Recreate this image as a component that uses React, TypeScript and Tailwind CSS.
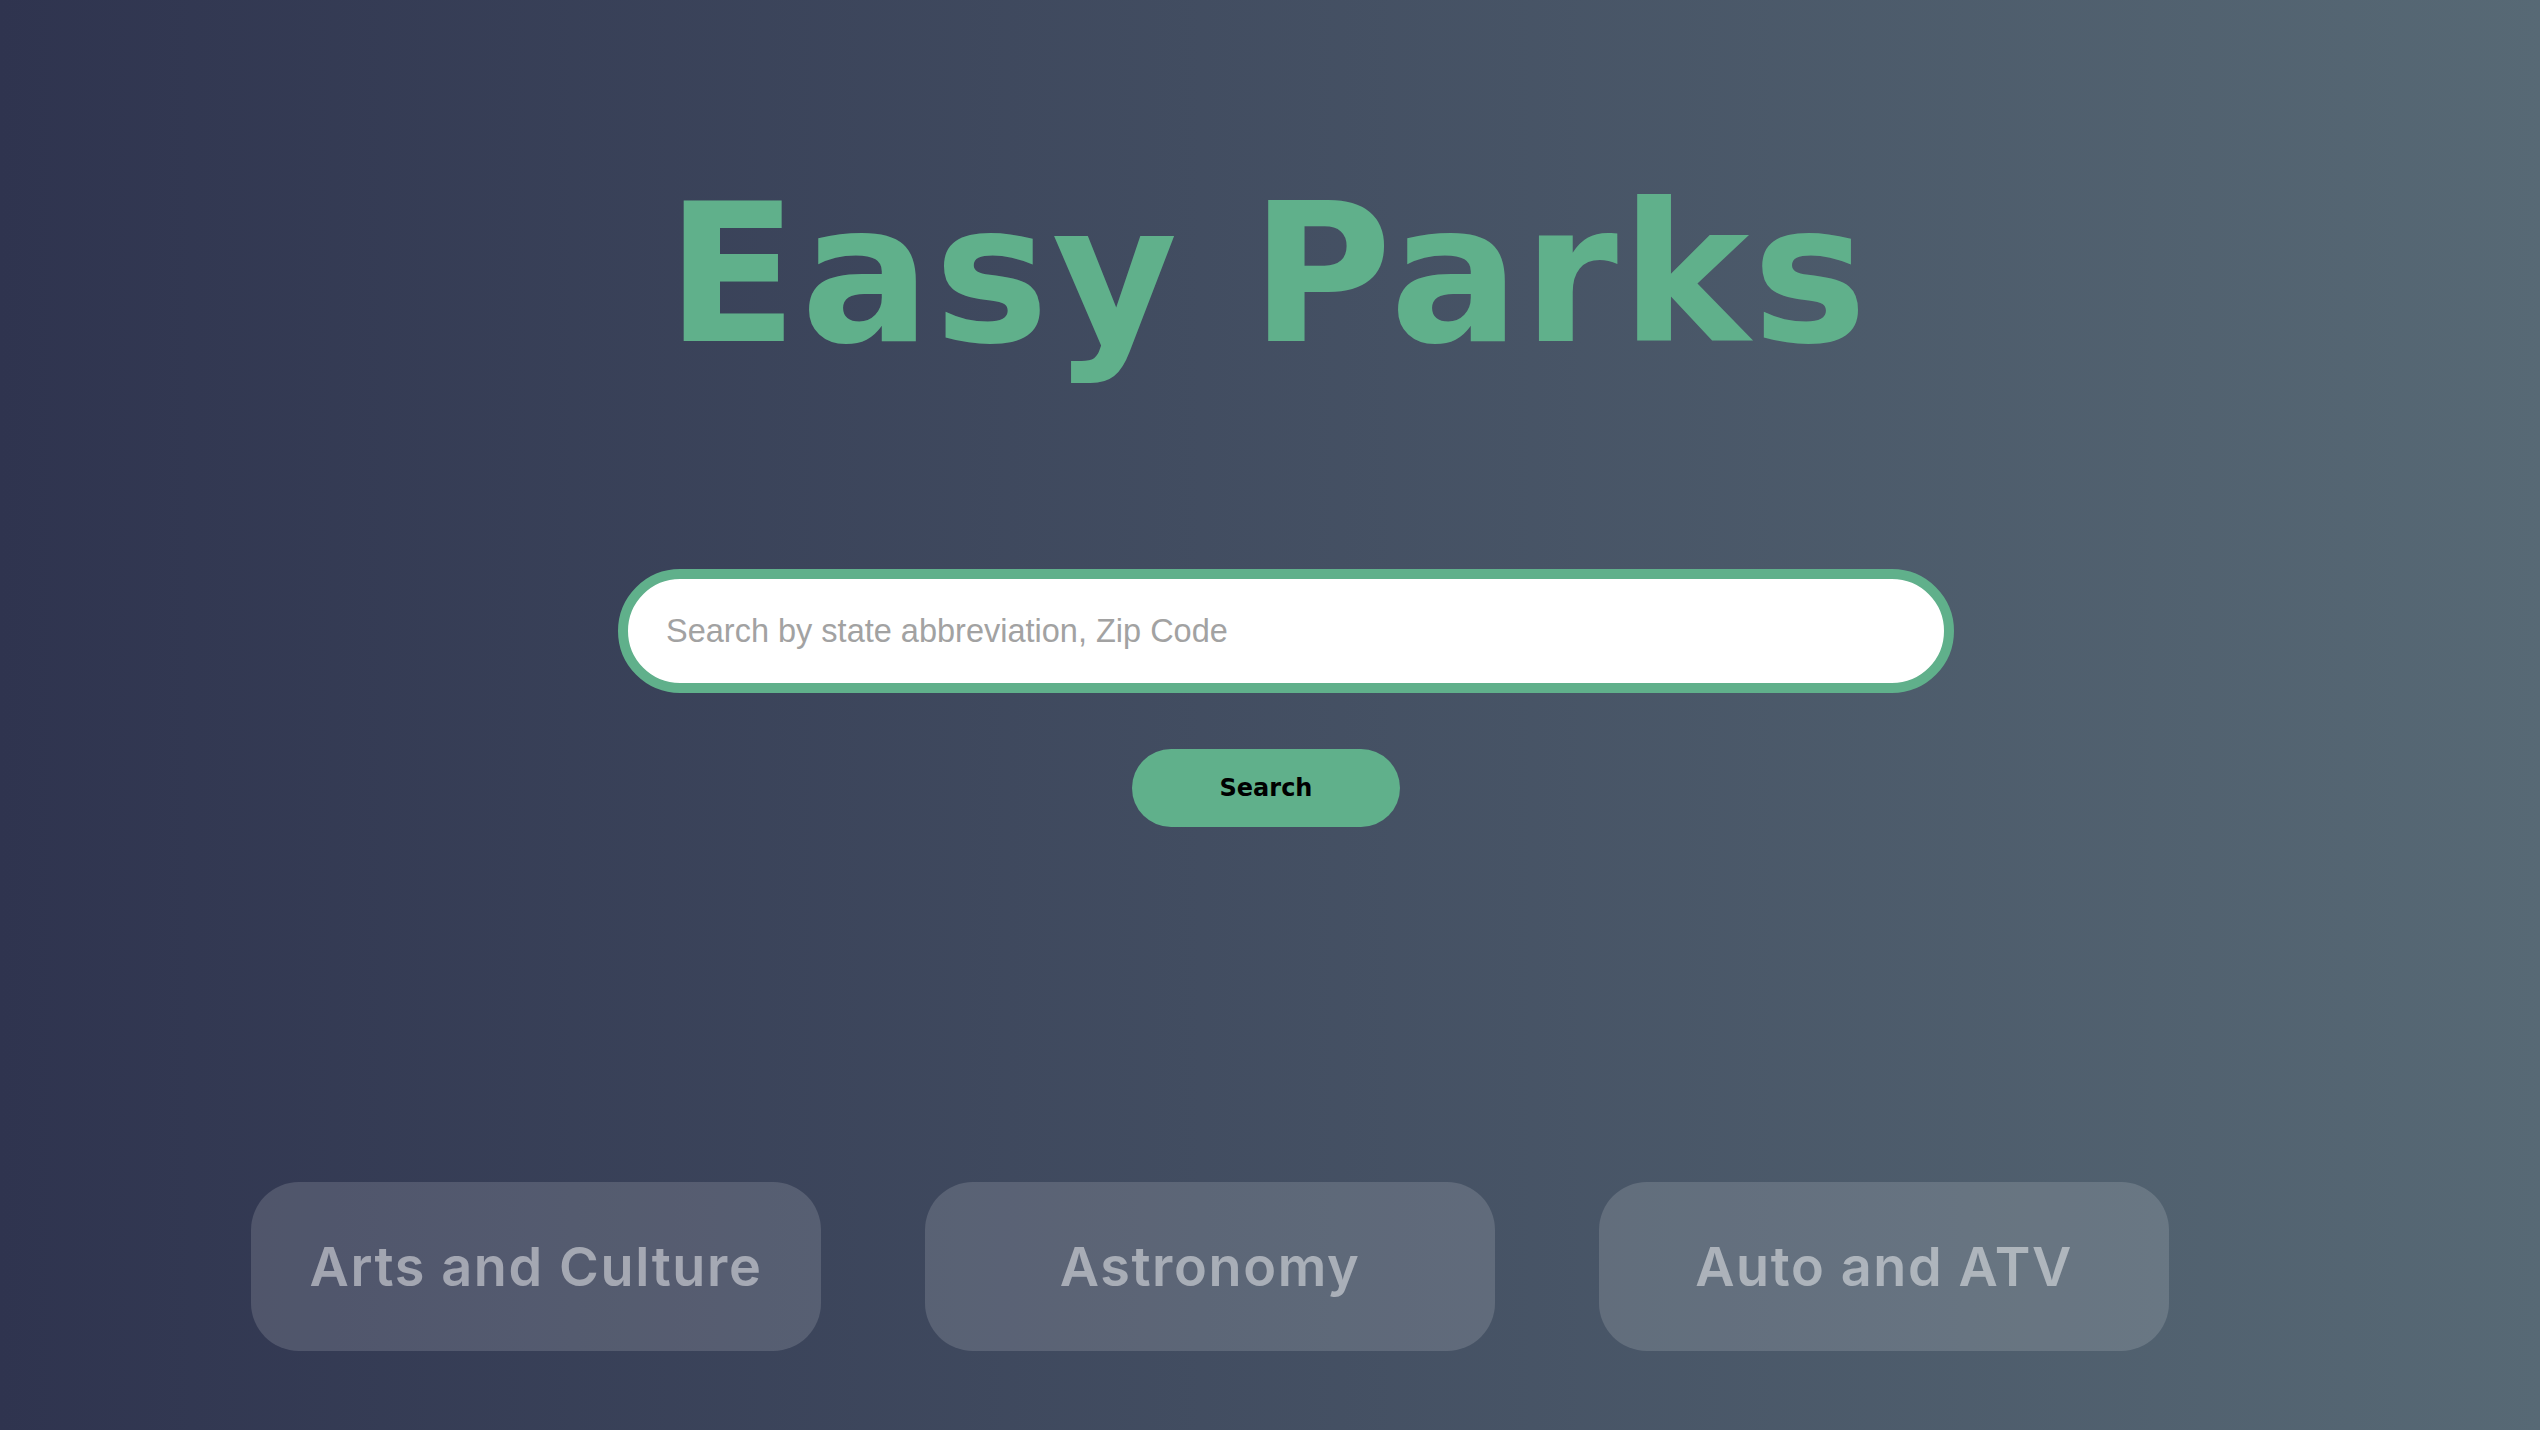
import { useState } from 'react'

const categories = ['Arts and Culture', 'Astronomy', 'Auto and ATV']

export default function App() {
  const [query, setQuery] = useState('')

  return (
    <div className="h-[1430px] w-full overflow-hidden bg-[linear-gradient(to_right,#2f344f,#576975)]">
      <div className="flex flex-col items-center">
        <h1 className="mt-[178px] mr-[4px] text-[193px] leading-none font-bold tracking-[0.015em] text-[#60b08b] [font-family:'DejaVu_Sans',sans-serif]">
          Easy Parks
        </h1>

        <form
          className="mt-[198px] flex flex-col items-center"
          onSubmit={(e) => e.preventDefault()}
        >
          <input
            value={query}
            onChange={(e) => setQuery(e.target.value)}
            placeholder="Search by state abbreviation, Zip Code"
            className="ml-[32px] h-[124px] w-[1336px] rounded-full border-[10px] border-[#60b08b] bg-white px-[38px] text-[32.5px] text-gray-800 outline-none placeholder:text-[#a2a2a2] [font-family:'Liberation_Sans',Arial,sans-serif]"
          />
          <button
            type="submit"
            className="mt-[56px] mr-[8px] h-[78px] w-[268px] rounded-full bg-[#60b08b] text-[24px] font-bold text-black [font-family:'DejaVu_Sans',sans-serif]"
          >
            Search
          </button>
        </form>
      </div>

      <div className="mt-[355px] flex gap-[104px] pl-[251px]">
        {categories.map((c) => (
          <button
            key={c}
            className="flex h-[169px] w-[570px] items-center justify-center rounded-[48px] bg-white/[0.14] text-[54px] font-semibold tracking-[0.03em] text-white/[0.47] [font-family:Inter,sans-serif]"
          >
            {c}
          </button>
        ))}
      </div>
    </div>
  )
}
